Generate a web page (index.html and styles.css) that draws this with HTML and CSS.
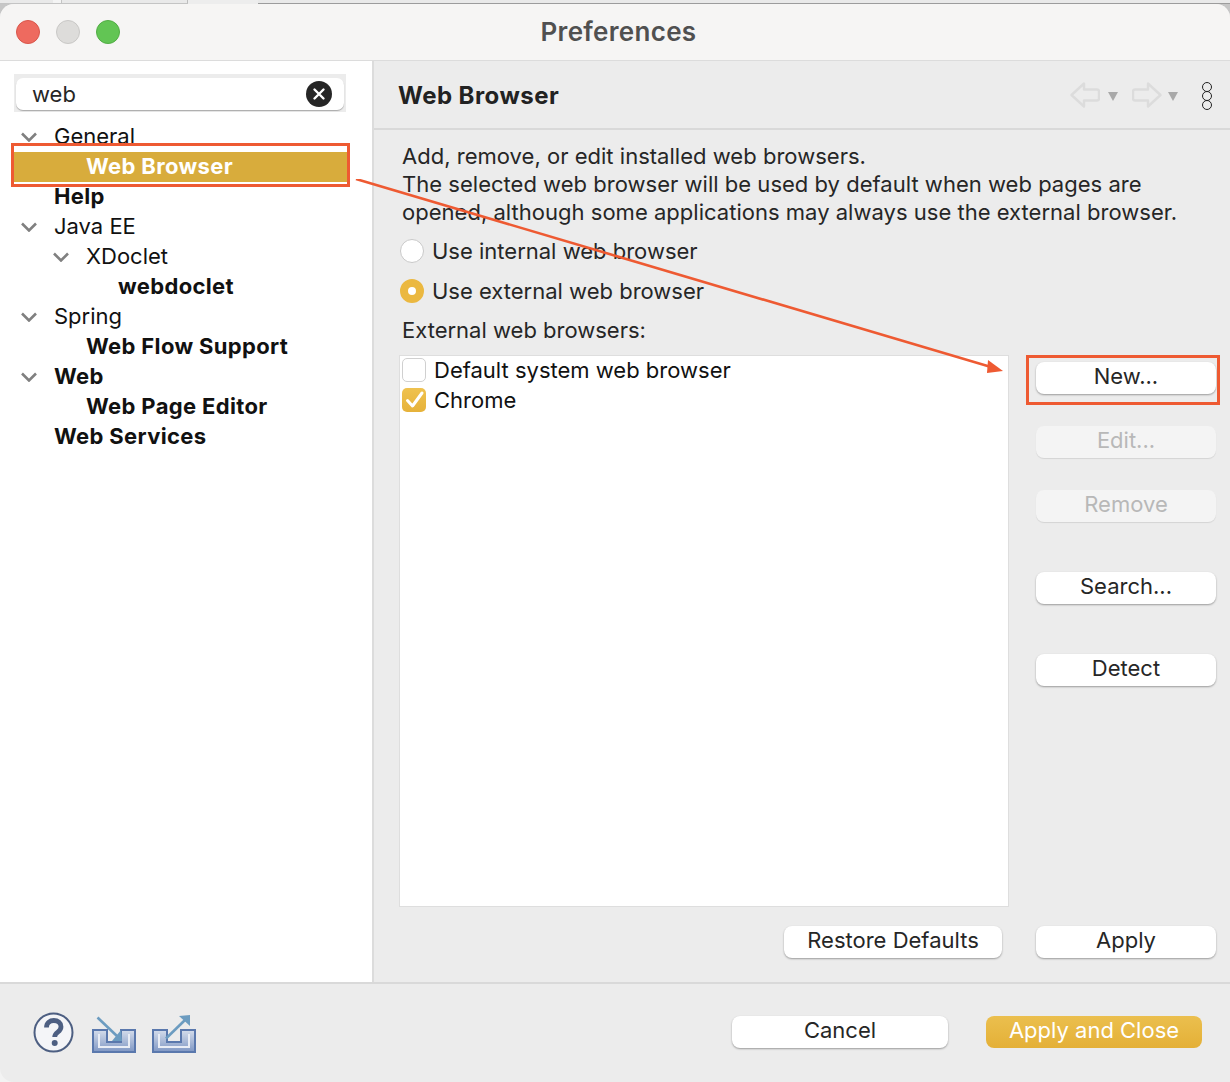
FILE: index.html
```html
<!DOCTYPE html>
<html lang="en">

<head>
    <meta charset="UTF-8">
    <meta name="viewport" content="width=device-width, initial-scale=1.0">
    <title>Preferences</title>
    <link rel="stylesheet" href="styles.css">
</head>

<body>
    <div class="backdrop">
        <!-- bits of the window behind the dialog -->
        <div class="behind">
            <span class="behind-a"></span>
            <span class="behind-b"></span>
            <span class="behind-c"></span>
            <span class="behind-d"></span>
        </div>

        <div class="window">
            <div class="titlebar">
                <div class="lights">
                    <span class="light red"></span>
                    <span class="light gray"></span>
                    <span class="light green"></span>
                </div>
                <div class="title">Preferences</div>
            </div>

            <div class="main">
                <!-- left tree -->
                <div class="side">
                    <div class="search">
                        <div class="search-box">
                            <span>web</span>
                            <svg class="clear" width="26" height="26" viewBox="0 0 26 26">
                                <circle cx="13" cy="13" r="13" fill="#262626" />
                                <path d="M8.5 8.5l9 9M17.5 8.5l-9 9" stroke="#fff" stroke-width="2.4" stroke-linecap="round" />
                            </svg>
                        </div>
                    </div>
                    <div class="tree">
                        <div class="row lv1"><svg class="chev" width="18" height="10" viewBox="0 0 18 10"><path d="M2 1.5l7 7 7-7" fill="none" stroke="#808080" stroke-width="2.6" /></svg>General</div>
                        <div class="row lv2 selected">Web Browser</div>
                        <div class="row lv1 bold">Help</div>
                        <div class="row lv1"><svg class="chev" width="18" height="10" viewBox="0 0 18 10"><path d="M2 1.5l7 7 7-7" fill="none" stroke="#808080" stroke-width="2.6" /></svg>Java EE</div>
                        <div class="row lv2"><svg class="chev" width="18" height="10" viewBox="0 0 18 10"><path d="M2 1.5l7 7 7-7" fill="none" stroke="#808080" stroke-width="2.6" /></svg>XDoclet</div>
                        <div class="row lv3 bold">webdoclet</div>
                        <div class="row lv1"><svg class="chev" width="18" height="10" viewBox="0 0 18 10"><path d="M2 1.5l7 7 7-7" fill="none" stroke="#808080" stroke-width="2.6" /></svg>Spring</div>
                        <div class="row lv2 bold">Web Flow Support</div>
                        <div class="row lv1 bold"><svg class="chev" width="18" height="10" viewBox="0 0 18 10"><path d="M2 1.5l7 7 7-7" fill="none" stroke="#808080" stroke-width="2.6" /></svg>Web</div>
                        <div class="row lv2 bold">Web Page Editor</div>
                        <div class="row lv1 bold">Web Services</div>
                    </div>
                </div>

                <!-- right page -->
                <div class="page">
                    <div class="page-head">
                        <h1>Web Browser</h1>
                        <div class="nav">
                            <svg width="30" height="26" viewBox="0 0 30 26"><path d="M1.5 13L14 1.500v6h13a2 2 0 0 1 2 2v7a2 2 0 0 1-2 2H14v6z" fill="none" stroke="#dcdcdc" stroke-width="2.4" stroke-linejoin="round" /></svg>
                            <span class="drop"></span>
                            <svg class="nav-next" width="30" height="26" viewBox="0 0 30 26"><path d="M28.500 13L16 1.500v6H3a2 2 0 0 0-2 2v7a2 2 0 0 0 2 2h13v6z" fill="none" stroke="#dcdcdc" stroke-width="2.4" stroke-linejoin="round" /></svg>
                            <span class="drop"></span>
                            <div class="dots"><i></i><i></i><i></i></div>
                        </div>
                    </div>

                    <div class="page-body">
                        <p class="desc">Add, remove, or edit installed web browsers.<br>The selected web browser will be used by default when web pages are<br>opened, although some applications may always use the external browser.</p>
                        <label class="radio-row"><span class="radio"></span>Use internal web browser</label>
                        <label class="radio-row"><span class="radio on"></span>Use external web browser</label>
                        <div class="list-label">External web browsers:</div>

                        <div class="browsers">
                            <div class="list">
                                <div class="item"><span class="check"></span>Default system web browser</div>
                                <div class="item">
                                    <span class="check on"><svg width="24" height="24" viewBox="0 0 24 24"><path d="M5.500 12.500l5 5.500 9.500-13" fill="none" stroke="#fff" stroke-width="3" stroke-linecap="round" stroke-linejoin="round" /></svg></span>Chrome
                                </div>
                            </div>
                            <div class="btn-col">
                                <button class="btn">New...</button>
                                <button class="btn off">Edit...</button>
                                <button class="btn off">Remove</button>
                                <button class="btn gap-more">Search...</button>
                                <button class="btn gap-more">Detect</button>
                            </div>
                        </div>

                        <div class="page-btns">
                            <button class="btn restore">Restore Defaults</button>
                            <button class="btn">Apply</button>
                        </div>
                    </div>
                </div>
            </div>

            <div class="footer">
                <div class="foot-icons">
                    <svg class="help" width="42" height="42" viewBox="0 0 42 42">
                        <circle cx="20.500" cy="20.500" r="19" fill="#f4f5f8" stroke="#4d5f82" stroke-width="2" />
                        <path d="M13.500 15.500c0-4.500 3.300-7 7.300-7s7.200 2.300 7.200 6.200c0 5.700-6.300 5-6.300 10.300" fill="none" stroke="#4d5f82" stroke-width="4.800" />
                        <circle cx="21.700" cy="31" r="3" fill="#4d5f82" />
                    </svg>
                    <svg class="tray" width="44" height="38" viewBox="0 0 44 38">
                        <defs>
                            <linearGradient id="trayFill" x1="0" y1="0" x2="0" y2="1">
                                <stop offset="0" stop-color="#d5ddeb" />
                                <stop offset="1" stop-color="#7f97c4" />
                            </linearGradient>
                        </defs>
                        <path d="M1 15h14v12h14V15h14v22H1z" fill="url(#trayFill)" stroke="#5a78ad" stroke-width="2" />
                        <path d="M7 19v13h30V19" fill="none" stroke="#e9edf5" stroke-width="2" />
                        <path d="M5.500 2.500L26 22" stroke="#6c9cc0" stroke-width="2.600" />
                        <path d="M30 26H20l9-11z" fill="#6c9cc0" />
                    </svg>
                    <svg class="tray" width="44" height="38" viewBox="0 0 44 38">
                        <path d="M1 15h14v12h14V15h14v22H1z" fill="url(#trayFill)" stroke="#5a78ad" stroke-width="2" />
                        <path d="M7 19v13h30V19" fill="none" stroke="#e9edf5" stroke-width="2" />
                        <path d="M14 23.500L33 5" stroke="#6c9cc0" stroke-width="2.600" />
                        <path d="M38 0v11L27 1z" fill="#6c9cc0" />
                    </svg>
                </div>
                <button class="btn cancel">Cancel</button>
                <button class="btn primary">Apply and Close</button>
            </div>
        </div>

        <!-- red annotations on top of the screenshot -->
        <div class="mark mark-tree"></div>
        <div class="mark mark-new"></div>
        <svg class="mark-arrow" width="660" height="200" viewBox="0 0 660 200">
            <path d="M1 0L636 188" stroke="#ee5a32" stroke-width="2.600" />
            <path d="M648 192L633 181l-1 13z" fill="#ee5a32" />
        </svg>
    </div>
</body>

</html>
```

FILE: styles.css
```css
* {
    box-sizing: border-box;
}

html,
body {
    margin: 0;
    height: 100%;
}

body {
    font-family: Inter, "Liberation Sans", sans-serif;
    font-size: 22px;
    color: #262626;
    background-color: #ececec;
    overflow: hidden;
}

.backdrop {
    position: relative;
    width: 1230px;
    height: 1082px;
    background: linear-gradient(#c6c6c6 0, #c6c6c6 30px, #f3f3f3 30px);
}

.behind {
    display: flex;
    height: 4px;
    background-color: #ededed;
}

.behind span {
    display: block;
    height: 4px;
    background-color: #e9e9e9;
    border-bottom: 1px solid #c4c4c4;
}

.behind-a {
    width: 53px;
}

.behind-b {
    width: 9px;
    border-right: 1px solid #c4c4c4;
    background-color: #f4f4f4 !important;
}

.behind-c {
    width: 126px;
    border-right: 1px solid #bdbdbd;
}

.behind-d {
    flex: 1;
    margin-left: 70px;
    border-bottom-color: #9c9c9c !important;
}

.window {
    display: flex;
    flex-direction: column;
    height: 1078px;
    border-radius: 14px 14px 0 14px;
    overflow: hidden;
    background-color: #ececec;
}

.titlebar {
    position: relative;
    flex: none;
    height: 57px;
    padding: 0 0 2px 7px;
    background-color: #f6f5f4;
    border-bottom: 1px solid #dcdcdc;
    display: flex;
    align-items: center;
    justify-content: center;
}

.lights {
    position: absolute;
    left: 16px;
    top: 16px;
    display: flex;
    gap: 16px;
}

.light {
    width: 24px;
    height: 24px;
    border-radius: 50%;
}

.red {
    background-color: #ee6a5f;
    border: 1px solid #d9564b;
}

.gray {
    background-color: #dddcda;
    border: 1px solid #c9c8c6;
}

.green {
    background-color: #62c554;
    border: 1px solid #52ad45;
}

.title {
    font-size: 26px;
    font-weight: 600;
    letter-spacing: 0.3px;
    color: #505050;
}

.main {
    flex: 1;
    display: flex;
    min-height: 0;
}

.side {
    width: 374px;
    flex: none;
    background-color: #fff;
    border-right: 2px solid #dcdcdc;
}

.search {
    margin: 13px 26px 0 14px;
    padding: 4px 2px 2px;
    background-color: #ececec;
}

.search-box {
    display: flex;
    align-items: center;
    justify-content: space-between;
    height: 32px;
    padding: 0 12px 0 16px;
    background-color: #fff;
    border-radius: 7px;
    box-shadow: 0 1px 1px #aaa;
}

.clear {
    display: block;
}

.tree {
    margin-top: 10px;
}

.row {
    position: relative;
    height: 30px;
    line-height: 28px;
    color: #111;
    white-space: nowrap;
}

.chev {
    position: absolute;
    top: 10px;
    margin-left: -34px;
}

.lv1 {
    padding-left: 54px;
}

.lv2 {
    padding-left: 86px;
}

.lv3 {
    padding-left: 118px;
}

.bold {
    font-weight: 700;
    letter-spacing: 0.35px;
}

.selected {
    margin-left: 13px;
    margin-right: 25px;
    padding-left: 73px;
    font-weight: 700;
    letter-spacing: 0.35px;
    color: #fff;
    background-color: #d8ac3c;
}

.page {
    flex: 1;
    min-width: 0;
    display: flex;
    flex-direction: column;
}

.page-head {
    flex: none;
    height: 69px;
    padding: 0 18px 0 24px;
    display: flex;
    align-items: center;
    justify-content: space-between;
    border-bottom: 2px solid #d9d9d9;
}

h1 {
    margin: 0;
    padding-top: 2px;
    font-size: 24px;
    font-weight: 700;
    letter-spacing: 0.45px;
    color: #222;
}

.nav {
    display: flex;
    align-items: center;
}

.drop {
    width: 0;
    height: 0;
    margin: 4px 0 0 8px;
    border-left: 5px solid transparent;
    border-right: 5px solid transparent;
    border-top: 9px solid #a9a9a9;
}

.nav-next {
    margin: 0 -2px 0 14px;
}

.dots {
    display: flex;
    flex-direction: column;
    margin: 4px 0 0 24px;
}

.dots i {
    display: block;
    width: 10px;
    height: 10px;
    margin-top: -1px;
    border: 1.500px solid #222;
    border-radius: 50%;
}

.page-body {
    flex: 1;
    min-height: 0;
    padding: 12px 0 0 25px;
    display: flex;
    flex-direction: column;
}

.desc {
    margin: 0 0 0 3px;
    line-height: 28px;
    letter-spacing: 0.02px;
}

.radio-row {
    display: flex;
    align-items: center;
    gap: 8px;
    height: 24px;
    margin: 16px 0 0 1px;
}

.radio-row:first-of-type {
    margin-top: 13px;
}

.radio {
    width: 24px;
    height: 24px;
    border-radius: 50%;
    background-color: #fff;
    border: 1px solid #c8c8c8;
}

.radio.on {
    border: 8px solid #ebb840;
}

.list-label {
    margin: 13px 0 0 3px;
    line-height: 28px;
}

.browsers {
    display: flex;
    margin-top: 11px;
    gap: 27px;
}

.list {
    width: 610px;
    height: 552px;
    background-color: #fff;
    border: 1px solid #dedede;
    color: #111;
}

.item {
    display: flex;
    align-items: center;
    gap: 8px;
    height: 30px;
    padding-left: 2px;
}

.item:first-child {
    margin-top: -1px;
}

.check {
    width: 24px;
    height: 24px;
    border-radius: 5px;
    background-color: #fff;
    border: 1px solid #d0d0d0;
}

.check.on {
    border: 0;
    background: linear-gradient(#efc24f, #e6b23a);
}

.check svg {
    display: block;
}

.btn-col {
    width: 180px;
    padding-top: 7px;
    display: flex;
    flex-direction: column;
    gap: 32px;
}

.btn {
    display: block;
    width: 180px;
    height: 32px;
    padding: 0 0 5px;
    border: 0;
    border-radius: 8px;
    font: inherit;
    color: #262626;
    background-color: #fff;
    box-shadow: 0 1px 2px rgba(0, 0, 0, 0.35);
}

.btn.off {
    color: #b8b8b8;
    background-color: #f4f4f4;
    box-shadow: 0 1px 1px rgba(0, 0, 0, 0.1);
}

.gap-more {
    margin-top: 18px;
}

.page-btns {
    display: flex;
    justify-content: flex-end;
    gap: 34px;
    margin: 19px 14px 0 0;
}

.restore {
    width: 218px;
}

.footer {
    flex: none;
    height: 100px;
    display: flex;
    align-items: flex-start;
    padding-top: 32px;
    border-top: 2px solid #d9d9d9;
}

.foot-icons {
    display: flex;
    align-items: flex-end;
    gap: 16px;
    margin: -4px 0 0 33px;
    width: 699px;
}

.help {
    display: block;
    margin-right: 1px;
}

.tray {
    display: block;
    margin-bottom: 1px;
}

.cancel {
    width: 216px;
}

.primary {
    width: 216px;
    margin-left: 38px;
    color: #fff;
    background: linear-gradient(#ebbf4e, #e4b037);
    box-shadow: none;
}

.mark {
    position: absolute;
    border: 3px solid #ee5a32;
}

.mark-tree {
    left: 11px;
    top: 143px;
    width: 339px;
    height: 44px;
}

.mark-new {
    left: 1026px;
    top: 355px;
    width: 194px;
    height: 50px;
}

.mark-arrow {
    position: absolute;
    left: 355px;
    top: 179px;
}
```
